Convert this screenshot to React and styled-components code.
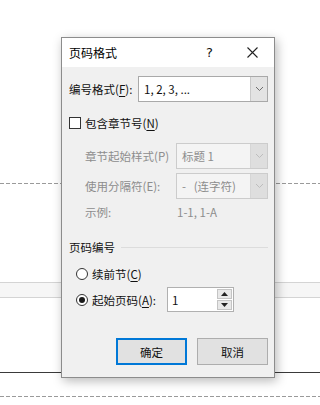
import React from 'react'
import styled, { createGlobalStyle } from 'styled-components'

const GlobalStyle = createGlobalStyle`
  html, body {
    margin: 0;
    padding: 0;
    background: #ffffff;
  }
  body {
    font-family: "Noto Sans CJK SC", "Noto Sans", sans-serif;
    font-size: 12px;
    color: #1a1a1a;
  }
`

const Page = styled.div`
  position: relative;
  width: 320px;
  height: 405px;
  overflow: hidden;
  background: #ffffff;
`

// document lines behind the dialog
const Doc = styled.div`
  display: flex;
  flex-direction: column;
  padding-top: 183px;
`

const DashedRule = styled.div`
  height: 1px;
  margin-top: ${p => p.$gap || 0}px;
  background: repeating-linear-gradient(to right, #9a9a9a 0 4px, transparent 4px 6px);
`

const Band = styled.div`
  height: 14px;
  margin-top: 98px;
  border-top: 1px solid #d4d4d4;
  border-bottom: 1px solid #d4d4d4;
  background: #f6f6f6;
`

const SolidRule = styled.div`
  height: 1px;
  margin-top: 74px;
  background: #3a3a3a;
`

const Dialog = styled.div`
  position: absolute;
  left: 61px;
  top: 37px;
  width: 212px;
  height: 339px;
  display: flex;
  flex-direction: column;
  border: 1px solid #8c8c8c;
  background: #f0f0f0;
  box-shadow: 2px 3px 10px rgba(0, 0, 0, 0.28);
`

const TitleBar = styled.div`
  height: 29px;
  flex-shrink: 0;
  display: flex;
  align-items: center;
  background: #ffffff;
  padding-left: 7px;
`

const Title = styled.div`
  flex: 1;
  line-height: 16px;
  color: #000;
`

const TitleButton = styled.div`
  width: 43px;
  height: 29px;
  display: flex;
  align-items: center;
  justify-content: center;
  font-family: "DejaVu Sans", sans-serif;
  font-size: 13px;
  color: #111;
`

const Body = styled.div`
  flex: 1;
  display: flex;
  flex-direction: column;
  padding: 9px 6px 0 7px;
  font-size: 11.5px;
`

const Row = styled.div`
  display: flex;
  align-items: center;
  height: ${p => p.$h || 18}px;
  margin-top: ${p => p.$gap || 0}px;
  padding-left: ${p => p.$indent || 0}px;
`

const Label = styled.div`
  width: ${p => (p.$w ? `${p.$w}px` : 'auto')};
  flex-shrink: 0;
  line-height: 16px;
  color: ${p => (p.$disabled ? '#8d8d8d' : '#111')};
  white-space: nowrap;
`

const Key = styled.span`
  text-decoration: underline;
  text-underline-offset: 2px;
`

const Combo = styled.div`
  width: ${p => p.$w}px;
  height: 26px;
  box-sizing: border-box;
  display: flex;
  border: 1px solid ${p => (p.$disabled ? '#cccccc' : '#a9a9a9')};
  background: ${p => (p.$disabled ? '#f4f4f4' : '#ffffff')};
`

const ComboText = styled.div`
  flex: 1;
  display: flex;
  align-items: center;
  padding-left: 5px;
  line-height: 16px;
  white-space: pre;
  color: ${p => (p.$disabled ? '#8d8d8d' : '#111')};
`

const ComboButton = styled.div`
  width: 16px;
  display: flex;
  align-items: center;
  justify-content: center;
  background: ${p => (p.$disabled ? '#dedede' : '#e3e3e3')};
  border-left: 1px solid ${p => (p.$disabled ? '#d6d6d6' : '#c9c9c9')};
`

const CheckBox = styled.div`
  width: 12px;
  height: 12px;
  box-sizing: border-box;
  border: 1px solid #333;
  background: #fff;
  margin-right: 4px;
  flex-shrink: 0;
`

const Radio = styled.div`
  width: 12px;
  height: 12px;
  box-sizing: border-box;
  border: 1px solid #333;
  border-radius: 50%;
  background: #fff;
  margin: 0 4px 0 0;
  display: flex;
  align-items: center;
  justify-content: center;
  flex-shrink: 0;
  &::after {
    content: '';
    display: ${p => (p.$checked ? 'block' : 'none')};
    width: 6px;
    height: 6px;
    border-radius: 50%;
    background: #1a1a1a;
  }
`

const GroupHead = styled.div`
  display: flex;
  align-items: center;
  height: 16px;
  margin-top: 19px;
  gap: 6px;
  line-height: 16px;
  color: #111;
  &::after {
    content: '';
    flex: 1;
    height: 1px;
    background: #dcdcdc;
  }
`

const SpinBox = styled.div`
  width: 67px;
  height: 25px;
  box-sizing: border-box;
  margin-left: 4px;
  display: flex;
  border: 1px solid #b0b0b0;
  background: #fff;
`

const SpinText = styled.div`
  flex: 1;
  padding-left: 4px;
  display: flex;
  align-items: center;
  line-height: 16px;
  color: #111;
`

const SpinButtons = styled.div`
  width: 15px;
  display: flex;
  flex-direction: column;
  gap: 1px;
  padding: 1px 1px 1px 0;
`

const SpinButton = styled.div`
  flex: 1;
  display: flex;
  align-items: center;
  justify-content: center;
  background: #e8e8e8;
  border: 1px solid #c4c4c4;
`

const Footer = styled.div`
  display: flex;
  justify-content: flex-end;
  gap: 10px;
  margin-top: 26px;
`

const Button = styled.div`
  width: 71px;
  height: 27px;
  box-sizing: border-box;
  display: flex;
  align-items: center;
  justify-content: center;
  background: #e1e1e1;
  border: ${p => (p.$primary ? '2px solid #0078d7' : '1px solid #adadad')};
  color: #111;
  line-height: 16px;
`

const Chevron = ({ color }) => (
  <svg width="9" height="6" viewBox="0 0 9 6">
    <path d="M1 1 L4.5 4.5 L8 1" fill="none" stroke={color} strokeWidth="1" />
  </svg>
)

const Close = () => (
  <svg width="11" height="11" viewBox="0 0 11 11">
    <path d="M0.5 0.5 L10.5 10.5 M10.5 0.5 L0.5 10.5" stroke="#222" strokeWidth="1.1" />
  </svg>
)

const Tri = ({ up }) => (
  <svg width="7" height="4" viewBox="0 0 7 4">
    <path d={up ? 'M0 4 L3.5 0 L7 4 Z' : 'M0 0 L3.5 4 L7 0 Z'} fill="#222" />
  </svg>
)

const App = () => {
  return (
    <Page>
      <GlobalStyle />
      <Doc>
        <DashedRule />
        <Band />
        <SolidRule />
        <DashedRule $gap={23} />
      </Doc>

      <Dialog>
        <TitleBar>
          <Title>页码格式</Title>
          <TitleButton>?</TitleButton>
          <TitleButton><Close /></TitleButton>
        </TitleBar>

        <Body>
          <Row $h={26}>
            <Label $w={69}>编号格式(<Key>F</Key>):</Label>
            <Combo $w={131}>
              <ComboText>1, 2, 3, ...</ComboText>
              <ComboButton><Chevron color="#6e6e6e" /></ComboButton>
            </Combo>
          </Row>

          <Row $gap={12}>
            <CheckBox />
            <Label>包含章节号(<Key>N</Key>)</Label>
          </Row>

          <Row $h={26} $gap={11} $indent={16}>
            <Label $w={91} $disabled>章节起始样式(P)</Label>
            <Combo $w={93} $disabled>
              <ComboText $disabled>标题 1</ComboText>
              <ComboButton $disabled><Chevron color="#bdbdbd" /></ComboButton>
            </Combo>
          </Row>

          <Row $h={26} $gap={4} $indent={16}>
            <Label $w={91} $disabled>使用分隔符(E):</Label>
            <Combo $w={93} $disabled>
              <ComboText $disabled>{'-   (连字符)'}</ComboText>
              <ComboButton $disabled><Chevron color="#bdbdbd" /></ComboButton>
            </Combo>
          </Row>

          <Row $h={16} $gap={5} $indent={16}>
            <Label $w={92} $disabled>示例:</Label>
            <Label $disabled>1-1, 1-A</Label>
          </Row>

          <GroupHead>页码编号</GroupHead>

          <Row $gap={10} $indent={7}>
            <Radio />
            <Label>续前节(<Key>C</Key>)</Label>
          </Row>

          <Row $h={25} $gap={4} $indent={7}>
            <Radio $checked />
            <Label $w={71}>起始页码(<Key>A</Key>):</Label>
            <SpinBox>
              <SpinText>1</SpinText>
              <SpinButtons>
                <SpinButton><Tri up /></SpinButton>
                <SpinButton><Tri /></SpinButton>
              </SpinButtons>
            </SpinBox>
          </Row>

          <Footer>
            <Button $primary>确定</Button>
            <Button>取消</Button>
          </Footer>
        </Body>
      </Dialog>
    </Page>
  )
}

export default App
